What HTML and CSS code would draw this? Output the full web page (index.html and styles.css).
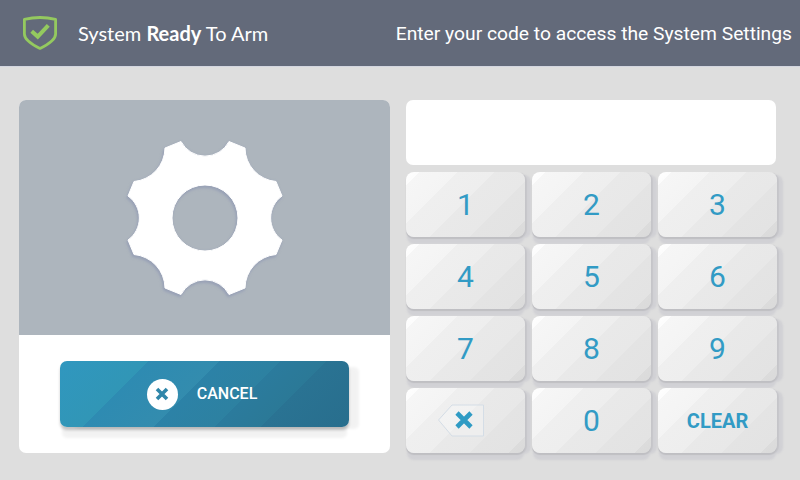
FILE: index.html
```html
<!DOCTYPE html>
<html lang="en">
<head>
<meta charset="utf-8">
<title>System Settings</title>
<link rel="stylesheet" href="styles.css">
</head>
<body>
<header class="topbar">
  <div class="status">
    <svg class="shield" viewBox="0 0 36 34" width="36" height="34" aria-hidden="true">
      <path d="M2.4 3.4 Q18 -0.4 33.6 3.4 V18 Q33.6 25 18 32.4 Q2.4 25 2.4 18 Z" fill="none" stroke="#94c95f" stroke-width="2.8" stroke-linejoin="round"/>
      <path d="M9.7 15.3 L15.7 20.6 L26.3 9.3" fill="none" stroke="#94c95f" stroke-width="4"/>
    </svg>
    <span class="status-text">System <b>Ready</b> To Arm</span>
  </div>
  <div class="prompt">Enter your code to access the System Settings</div>
</header>
<main class="content">
  <section class="card">
    <div class="card-top">
      <svg class="gear" viewBox="-82 -82 164 164" width="164" height="164" aria-hidden="true">
        <path fill="#fff" fill-rule="evenodd" stroke="#fff" stroke-width="1" stroke-linejoin="round" d="M-24 -76.5 A27 27 0 0 0 24 -76.5 L40 -70 A34 34 0 0 0 71 -36.5 L77 -22 A27 27 0 0 0 77 22 L71 36.5 A34 34 0 0 0 40 70 L24 76.5 A27 27 0 0 0 -24 76.5 L-40 70 A34 34 0 0 0 -71 36.5 L-77 22 A27 27 0 0 0 -77 -22 L-71 -36.5 A34 34 0 0 0 -40 -70 Z M-33 0 A33 33 0 1 0 33 0 A33 33 0 1 0 -33 0 Z"/>
      </svg>
    </div>
    <div class="card-bottom">
      <button class="cancel" type="button">
        <span class="cancel-icon">
          <svg viewBox="0 0 14 14" width="14" height="14" aria-hidden="true"><path d="M2 2 L12 12 M12 2 L2 12" stroke="#2f86a9" stroke-width="3.6" fill="none"/></svg>
        </span>
        <span class="cancel-label">CANCEL</span>
      </button>
    </div>
  </section>
  <section class="pad">
    <div class="display"></div>
    <div class="keys">
      <button class="key" type="button">1</button>
      <button class="key" type="button">2</button>
      <button class="key" type="button">3</button>
      <button class="key" type="button">4</button>
      <button class="key" type="button">5</button>
      <button class="key" type="button">6</button>
      <button class="key" type="button">7</button>
      <button class="key" type="button">8</button>
      <button class="key" type="button">9</button>
      <button class="key" type="button" aria-label="Backspace">
        <svg class="back-icon" viewBox="0 0 48 34" width="48" height="34" aria-hidden="true">
          <path d="M46.5 1 H15 L1.5 16 L15 32 H46.5 Z" fill="#ffffff" fill-opacity=".25" stroke="#d4dde6" stroke-width="1"/>
          <path d="M20 9 L34 23 M34 9 L20 23" stroke="#2f9bc4" stroke-width="4.6" fill="none"/>
        </svg>
      </button>
      <button class="key" type="button">0</button>
      <button class="key key-text" type="button">CLEAR</button>
    </div>
  </section>
</main>
</body>
</html>
```
FILE: styles.css
```css
* { box-sizing: border-box; }
html, body { margin: 0; padding: 0; }
body {
  width: 800px;
  height: 480px;
  overflow: hidden;
  background: #dedede;
  font-family: "Roboto", sans-serif;
}
.topbar {
  height: 67px;
  background: #636a7a;
  border-bottom: 1px solid #d3d6e0;
  display: flex;
  align-items: center;
  justify-content: space-between;
  padding: 0 8px 0 22px;
  color: #fff;
}
.status { display: flex; align-items: center; gap: 20px; }
.shield { display: block; }
.status-text { font-family: "Lato", sans-serif; font-size: 20px; }
.status-text b { font-weight: 700; }
.prompt { font-size: 19.25px; font-weight: 400; padding-top: 1px; }
.content {
  display: flex;
  align-items: flex-start;
  gap: 16px;
  padding: 33px 0 0 19px;
}
.card {
  width: 371px;
  height: 353px;
  background: #fff;
  border-radius: 7px;
  overflow: hidden;
  display: flex;
  flex-direction: column;
}
.card-top {
  height: 235px;
  background: #adb5bd;
  display: flex;
  align-items: center;
  justify-content: center;
}
.gear { display: block; filter: drop-shadow(-1px 2px 1px #98a1b5) drop-shadow(0 0 1px #a4acbc); }
.card-bottom { flex: 1; padding: 26px 41px 0; }
.cancel {
  width: 289px;
  height: 66px;
  border: 0;
  border-radius: 7px;
  color: #fff;
  display: flex;
  align-items: center;
  justify-content: center;
  gap: 19px;
  padding: 0 5px 0 0;
  font-family: "Roboto", sans-serif;
  font-size: 16px;
  font-weight: 500;
  background: linear-gradient(135deg, #3097bf 0, #3196b6 25%, #2e8bb2 25%, #338cae 45%, #2c82a7 45%, #2d81a1 62%, #2b7b9d 62%, #2b7997 75%, #2a7393 75%, #286e8d 100%);
  box-shadow: 0 3px 3px rgba(0,0,0,.2), 0 13px 3px -2px rgba(0,0,0,.05), 12px 4px 3px -2px rgba(0,0,0,.05);
}
.cancel-icon {
  width: 31px;
  height: 31px;
  border-radius: 50%;
  background: #fff;
  display: flex;
  align-items: center;
  justify-content: center;
}
.cancel-label { line-height: 1; }
.pad { width: 371px; display: flex; flex-direction: column; gap: 7px; }
.display { width: 370px; height: 65px; background: #fff; border-radius: 7px; }
.keys {
  display: grid;
  grid-template-columns: repeat(3, 119px);
  grid-auto-rows: 65px;
  gap: 7px;
}
.key {
  border: 0;
  padding: 0;
  border-radius: 8px;
  display: flex;
  align-items: center;
  justify-content: center;
  color: #329bc5;
  font-family: "Roboto", sans-serif;
  font-size: 30px;
  font-weight: 400;
  background: linear-gradient(135deg, #ffffff 0, #fcfcfc 7.6%, #f6f6f6 7.6%, #f4f4f4 28%, #efefef 28%, #eeeeee 48%, #e9e9e9 48%, #e8e8e8 70%, #e4e4e4 70%, #e3e3e3 91%, #dcdcdc 91%, #dadada 100%);
  box-shadow: 0 2px 1px #bfbfc3, 2px 1px 1px #c6c6ca, 0 8px 2px -1px #d1d1d5, 7px 2px 2px -1px #d1d1d5;
}
.back-icon { display: block; margin-right: 10px; }
.key-text { font-size: 20px; font-weight: 700; }
```
